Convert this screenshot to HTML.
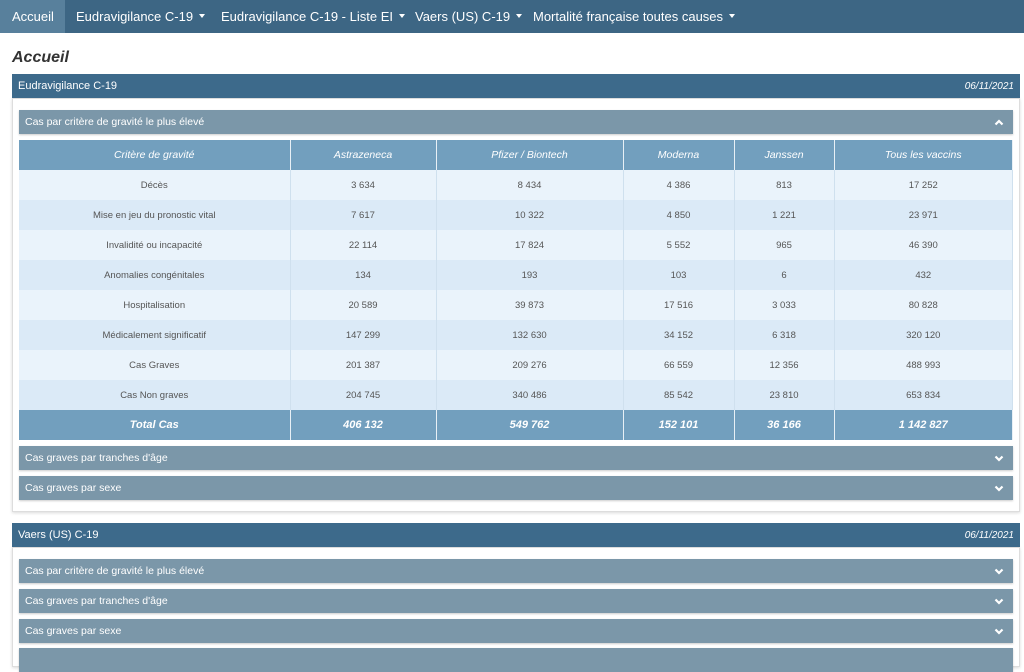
<!DOCTYPE html>
<html><head><meta charset="utf-8"><style>
*{box-sizing:border-box;margin:0;padding:0}
body{width:1024px;height:650px;overflow:hidden;background:#fff;font-family:"Liberation Sans",sans-serif;position:relative}
.nav{position:absolute;left:0;top:0;width:1024px;height:33px;background:#3d6684;color:#fff;font-size:13px}
.nav span{position:absolute;top:9px;white-space:nowrap}
.nav .act{left:0;top:0;width:65px;height:33px;background:#58809c;padding:9px 0 0 12px}
.car{display:inline-block;width:0;height:0;border-left:3px solid transparent;border-right:3px solid transparent;border-top:4px solid #fff;margin-left:6px;vertical-align:3px}
h1{position:absolute;left:12px;top:49px;font-size:16px;font-style:italic;font-weight:bold;color:#333}
.ch{position:absolute;left:12px;width:1008px;height:24px;background:#3d6a8b;color:#fff;font-size:11px;padding:6px 6px}
.ch i{position:absolute;right:6px;top:7px;font-size:10px}
.card{position:absolute;left:12px;width:1008px;border:1px solid #ddd;box-shadow:0 1px 3px rgba(0,0,0,.15)}
.acc{position:absolute;left:19px;width:994px;height:24px;background:#7b97a9;color:#fff;font-size:10.5px;padding:6px 6px;box-shadow:0 1px 2px rgba(0,0,0,.2)}
.acc svg{position:absolute;right:9px;top:9px}
table{position:absolute;left:19px;top:140px;width:994px;border-collapse:collapse;font-size:9.5px;color:#555;text-align:center}
td,th{border-right:1px solid #cfe0ee;height:30px;padding:0}
th{background:#729fbe;color:#fff;font-style:italic;font-weight:normal;font-size:10.5px;border-right:1px solid #e8f0f6}
tr:nth-child(even) td{background:#eaf3fb}
tr:nth-child(odd) td{background:#dbeaf7}
tr.t td{background:#729fbe;color:#fff;font-style:italic;font-weight:bold;font-size:11px;border-right:1px solid #e8f0f6}
</style></head><body>
<div class="nav"><span class="act">Accueil</span><span style="left:76px">Eudravigilance C-19<i class="car"></i></span><span style="left:221px">Eudravigilance C-19 - Liste EI<i class="car"></i></span><span style="left:415px">Vaers (US) C-19<i class="car"></i></span><span style="left:533px">Mortalité française toutes causes<i class="car"></i></span></div>
<h1>Accueil</h1>
<div class="card" style="top:98px;height:414px"></div>
<div class="ch" style="top:74px">Eudravigilance C-19<i>06/11/2021</i></div>
<div class="acc" style="top:110px">Cas par critère de gravité le plus élevé<svg width="10" height="7" viewBox="0 0 10 7"><path d="M1.5 5.5L5 2L8.5 5.5" stroke="#fff" stroke-width="2.2" fill="none"/></svg></div>
<table>
<tr><th style="width:271px">Critère de gravité</th><th style="width:146px">Astrazeneca</th><th style="width:187px">Pfizer / Biontech</th><th style="width:111px">Moderna</th><th style="width:100px">Janssen</th><th>Tous les vaccins</th></tr>
<tr><td>Décès</td><td>3 634</td><td>8 434</td><td>4 386</td><td>813</td><td>17 252</td></tr>
<tr><td>Mise en jeu du pronostic vital</td><td>7 617</td><td>10 322</td><td>4 850</td><td>1 221</td><td>23 971</td></tr>
<tr><td>Invalidité ou incapacité</td><td>22 114</td><td>17 824</td><td>5 552</td><td>965</td><td>46 390</td></tr>
<tr><td>Anomalies congénitales</td><td>134</td><td>193</td><td>103</td><td>6</td><td>432</td></tr>
<tr><td>Hospitalisation</td><td>20 589</td><td>39 873</td><td>17 516</td><td>3 033</td><td>80 828</td></tr>
<tr><td>Médicalement significatif</td><td>147 299</td><td>132 630</td><td>34 152</td><td>6 318</td><td>320 120</td></tr>
<tr><td>Cas Graves</td><td>201 387</td><td>209 276</td><td>66 559</td><td>12 356</td><td>488 993</td></tr>
<tr><td>Cas Non graves</td><td>204 745</td><td>340 486</td><td>85 542</td><td>23 810</td><td>653 834</td></tr>
<tr class="t"><td>Total Cas</td><td>406 132</td><td>549 762</td><td>152 101</td><td>36 166</td><td>1 142 827</td></tr>
</table>
<div class="acc" style="top:446px">Cas graves par tranches d'âge<svg width="10" height="7" viewBox="0 0 10 7"><path d="M1.5 1.5L5 5L8.5 1.5" stroke="#fff" stroke-width="2.2" fill="none"/></svg></div>
<div class="acc" style="top:476px">Cas graves par sexe<svg width="10" height="7" viewBox="0 0 10 7"><path d="M1.5 1.5L5 5L8.5 1.5" stroke="#fff" stroke-width="2.2" fill="none"/></svg></div>
<div class="card" style="top:547px;height:120px"></div>
<div class="ch" style="top:523px">Vaers (US) C-19<i>06/11/2021</i></div>
<div class="acc" style="top:559px">Cas par critère de gravité le plus élevé<svg width="10" height="7" viewBox="0 0 10 7"><path d="M1.5 1.5L5 5L8.5 1.5" stroke="#fff" stroke-width="2.2" fill="none"/></svg></div>
<div class="acc" style="top:589px">Cas graves par tranches d'âge<svg width="10" height="7" viewBox="0 0 10 7"><path d="M1.5 1.5L5 5L8.5 1.5" stroke="#fff" stroke-width="2.2" fill="none"/></svg></div>
<div class="acc" style="top:619px">Cas graves par sexe<svg width="10" height="7" viewBox="0 0 10 7"><path d="M1.5 1.5L5 5L8.5 1.5" stroke="#fff" stroke-width="2.2" fill="none"/></svg></div>
<div class="acc" style="top:648px"></div>
</body></html>
